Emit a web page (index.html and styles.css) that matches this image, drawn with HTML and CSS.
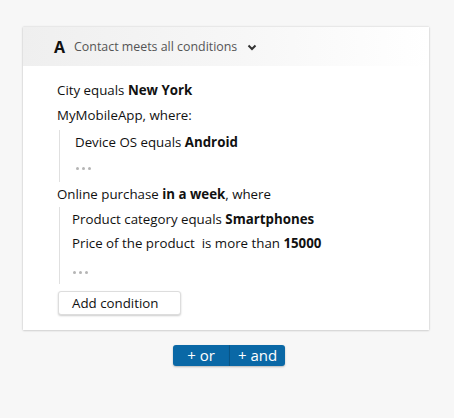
FILE: index.html
```html
<!DOCTYPE html>
<html>
<head>
<meta charset="utf-8">
<link rel="stylesheet" href="styles.css">
</head>
<body>
<div class="page">
  <div class="card">
    <div class="card-head">
      <span class="letter">A</span>
      <span class="head-text">Contact meets all conditions</span>
      <svg class="chev" width="10" height="7" viewBox="0 0 10 7"><path d="M1.5 1.5 L5 5 L8.5 1.5" fill="none" stroke="#333" stroke-width="2"/></svg>
    </div>
    <div class="card-body">
      <div class="row">City equals <b>New York</b></div>
      <div class="row">MyMobileApp, where:</div>
      <div class="group g1">
        <div class="row">Device OS equals <b>Android</b></div>
        <div class="dots"><i></i><i></i><i></i></div>
      </div>
      <div class="row">Online purchase <b>in a week</b>, where</div>
      <div class="group g2">
        <div class="row">Product category equals <b>Smartphones</b></div>
        <div class="row r-tight">Price of the product &nbsp;is more than <b>15000</b></div>
        <div class="dots dots2"><i></i><i></i><i></i></div>
      </div>
      <button class="add">Add condition</button>
    </div>
  </div>
  <div class="ops">
    <span class="op op-or">+ or</span><span class="op op-and">+ and</span>
  </div>
</div>
</body>
</html>
```
FILE: styles.css
```css
html, body { margin: 0; padding: 0; }
body {
  background: #f7f7f7;
  font-family: "Open Sans", "Liberation Sans", sans-serif;
  color: #111;
  width: 454px;
  height: 418px;
  overflow: hidden;
}
.page { padding: 27px 25px 0 23px; }
.card {
  background: #fff;
  box-shadow: 0 0 2px rgba(0,0,0,0.18), 0 1px 2px rgba(0,0,0,0.1);
  height: 303px;
  box-sizing: border-box;
}
.card-head {
  height: 39px;
  display: flex;
  align-items: center;
  padding-left: 31px;
  background: linear-gradient(90deg, #efefef 0%, #f7f7f7 55%, #ffffff 100%);
}
.letter { font-weight: 700; font-size: 16px; color: #111; margin-right: 9px; }
.head-text { font-size: 12.4px; color: #555; }
.chev { margin-left: 10px; margin-top: 2px; }
.card-body { padding: 12px 0 0 34px; font-size: 13.3px; }
.row { height: 25px; line-height: 25px; white-space: nowrap; }
.r-tight { height: 23px; line-height: 23px; }
.row b { font-weight: 700; }
.group { border-left: 1px solid #e0e0e0; margin-left: 2px; }
.g1 { padding-left: 15px; margin-top: 2px; padding-bottom: 1px; }
.g2 { padding-left: 12px; margin-top: 0; padding-bottom: 0; }
.dots { height: 24px; display: flex; align-items: center; gap: 3px; padding-left: 1px; }
.dots i { display: block; width: 3px; height: 3px; border-radius: 50%; background: #b5b5b5; }
.g1 .dots { height: 26px; }
.dots2 { margin-top: 5px; }
.add {
  display: block;
  margin-top: 7px;
  margin-left: 1px;
  width: 123px;
  height: 24px;
  background: #fff;
  border: 1px solid #ddd;
  border-radius: 3px;
  box-shadow: 0 1px 2px rgba(0,0,0,0.2);
  font-family: "Open Sans", "Liberation Sans", sans-serif;
  font-size: 13.3px;
  color: #111;
  text-align: left;
  padding: 0 0 0 13px;
}
.ops {
  display: flex;
  justify-content: center;
  margin-top: 15px;
  padding-left: 6px;
}
.op {
  background: #0a68a6;
  color: #fff;
  font-size: 15px;
  height: 21px;
  line-height: 20px;
  display: inline-block;
  box-shadow: 0 1px 2px rgba(0,0,0,0.25);
}
.op-or { width: 56px; border-radius: 3px 0 0 3px; text-align: center; border-right: 1px solid #095a8f; }
.op-and { width: 55px; border-radius: 0 3px 3px 0; text-align: center; }
```
